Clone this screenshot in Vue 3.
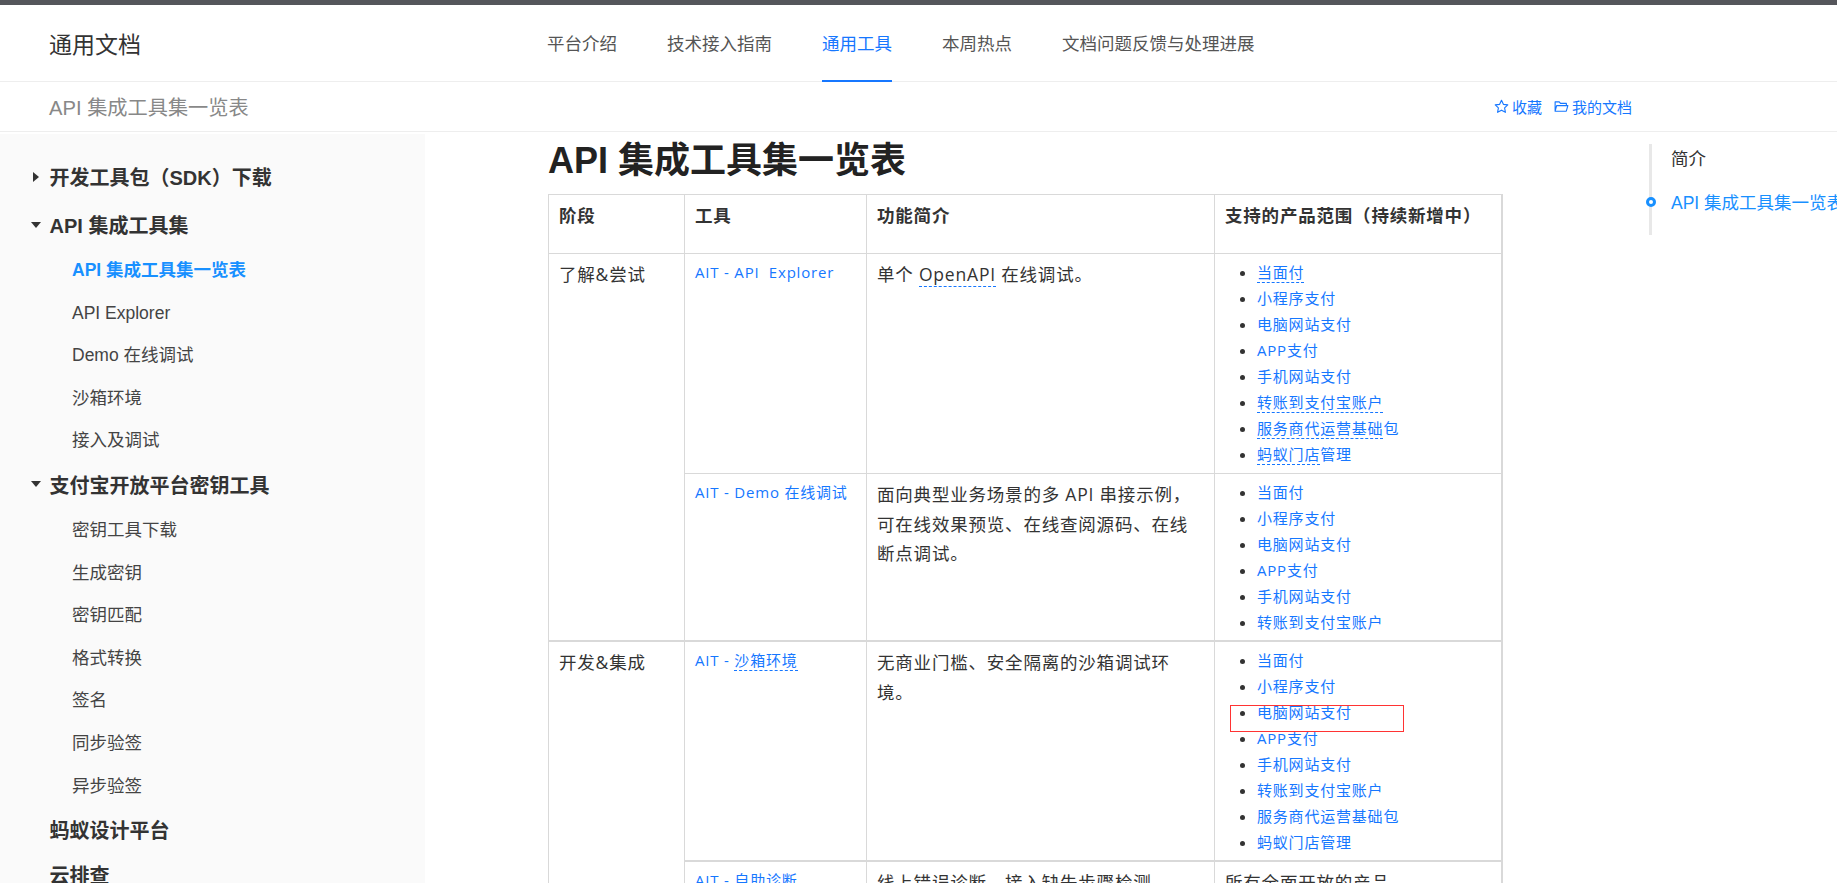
<template>
  <div class="page">
    <div class="top-strip"></div>

    <header class="site-head">
      <div class="logo">通用文档</div>
      <nav class="main-nav">
        <a v-for="item in navItems" :key="item" :class="{ active: item === '通用工具' }">{{ item }}</a>
      </nav>
    </header>

    <div class="sub-head">
      <div class="sub-title">API 集成工具集一览表</div>
      <div class="sub-actions">
        <a>
          <svg width="15" height="15" viewBox="0 0 16 16" fill="none" stroke="currentColor" stroke-width="1.2" stroke-linejoin="round">
            <path d="M8 1.4l2 4.3 4.7.6-3.4 3.2.9 4.7L8 11.9l-4.2 2.3.9-4.7L1.3 6.3 6 5.7z" />
          </svg>
          收藏
        </a>
        <a>
          <svg width="15" height="15" viewBox="0 0 16 16" fill="none" stroke="currentColor" stroke-width="1.2" stroke-linejoin="round">
            <path d="M1.2 13V3h4.4l1.3 1.7h6.3V7M1.2 13l1.6-6h12l-1.7 6z" />
          </svg>
          我的文档
        </a>
      </div>
    </div>

    <div class="layout">
      <aside class="sidebar">
        <div v-for="group in sideGroups" :key="group.title" class="side-group">
          <div class="side-title">
            <span class="arrow">
              <svg v-if="group.arrow === 'right'" width="6" height="10" viewBox="0 0 6 10"><path d="M0 0l6 5-6 5z" fill="#333" /></svg>
              <svg v-else-if="group.arrow === 'down'" width="10" height="6" viewBox="0 0 10 6"><path d="M0 0h10L5 6z" fill="#333" /></svg>
            </span>
            {{ group.title }}
          </div>
          <div v-if="group.children.length" class="side-children">
            <a v-for="child in group.children" :key="child" class="side-link" :class="{ current: child === 'API 集成工具集一览表' }">{{ child }}</a>
          </div>
        </div>
      </aside>

      <main class="content">
        <h1>API 集成工具集一览表</h1>
        <table class="tools">
          <colgroup>
            <col style="width: 136px" />
            <col style="width: 182px" />
            <col style="width: 348px" />
            <col style="width: 287px" />
          </colgroup>
          <thead>
            <tr>
              <th>阶段</th>
              <th>工具</th>
              <th>功能简介</th>
              <th>支持的产品范围（持续新增中）</th>
            </tr>
          </thead>
          <tbody>
            <tr>
              <td rowspan="2">了解&amp;尝试</td>
              <td><a class="tool-link">AIT - API&nbsp; Explorer</a></td>
              <td>单个 <span class="term">OpenAPI</span> 在线调试。</td>
              <td>
                <ul>
                  <li v-for="p in fullList" :key="p[0] + p[1]"><a><span class="term">{{ p[0] }}</span>{{ p[1] }}</a></li>
                </ul>
              </td>
            </tr>
            <tr>
              <td><a class="tool-link">AIT - Demo 在线调试</a></td>
              <td>面向典型业务场景的多 API 串接示例，可在线效果预览、在线查阅源码、在线断点调试。</td>
              <td>
                <ul class="tight">
                  <li v-for="p in shortList" :key="p"><a>{{ p }}</a></li>
                </ul>
              </td>
            </tr>
            <tr class="group-start">
              <td rowspan="2">开发&amp;集成</td>
              <td><a class="tool-link">AIT - <span class="term">沙箱环境</span></a></td>
              <td>无商业门槛、安全隔离的沙箱调试环境。</td>
              <td>
                <ul class="tight">
                  <li v-for="p in plainList" :key="p"><a>{{ p }}</a></li>
                </ul>
              </td>
            </tr>
            <tr class="group-start">
              <td><a class="tool-link">AIT - 自助诊断</a></td>
              <td>线上错误诊断、接入缺失步骤检测。</td>
              <td>所有全面开放的产品</td>
            </tr>
          </tbody>
        </table>
      </main>

      <div class="toc">
        <a>简介</a>
        <a class="on">API 集成工具集一览表</a>
      </div>
    </div>

    <div class="red-mark"></div>
  </div>
</template>

<script setup>
const navItems = ['平台介绍', '技术接入指南', '通用工具', '本周热点', '文档问题反馈与处理进展']

const sideGroups = [
  { title: '开发工具包（SDK）下载', arrow: 'right', children: [] },
  {
    title: 'API 集成工具集',
    arrow: 'down',
    children: ['API 集成工具集一览表', 'API Explorer', 'Demo 在线调试', '沙箱环境', '接入及调试']
  },
  {
    title: '支付宝开放平台密钥工具',
    arrow: 'down',
    children: ['密钥工具下载', '生成密钥', '密钥匹配', '格式转换', '签名', '同步验签', '异步验签']
  },
  { title: '蚂蚁设计平台', children: [] },
  { title: '云排查', children: [] }
]

const shortList = ['当面付', '小程序支付', '电脑网站支付', 'APP支付', '手机网站支付', '转账到支付宝账户']
const plainList = [...shortList, '服务商代运营基础包', '蚂蚁门店管理']

// 第一个是带虚线的术语部分，第二个是后面的普通文字
const fullList = [
  ['当面付', ''],
  ['', '小程序支付'],
  ['', '电脑网站支付'],
  ['', 'APP支付'],
  ['', '手机网站支付'],
  ['转账到支付宝账户', ''],
  ['服务商代运营基础', '包'],
  ['蚂蚁门店', '管理']
]
</script>

<style>
html,
body {
  margin: 0;
  overflow: hidden;
  background: #fff;
}
</style>

<style scoped>
.page {
  position: relative;
  height: 883px;
  overflow: hidden;
  font-family: "Liberation Sans", "Noto Sans CJK SC", sans-serif;
  color: #333;
}

.top-strip {
  height: 5px;
  background: #55565b;
}

.site-head {
  display: flex;
  align-items: center;
  height: 76px;
  padding-left: 49px;
  border-bottom: 1px solid #eee;
}

.logo {
  width: 498px;
  font-size: 23px;
  color: #333;
}

.main-nav {
  display: flex;
  gap: 50px;
  height: 100%;
}

.main-nav a {
  display: flex;
  align-items: center;
  font-size: 17.5px;
  color: #555;
  border-bottom: 2px solid transparent;
  margin-bottom: -1px;
}

.main-nav a.active {
  color: #1677ff;
  border-bottom-color: #1677ff;
}

.sub-head {
  display: flex;
  align-items: center;
  height: 49px;
  padding-left: 49px;
  border-bottom: 1px solid #eee;
}

.sub-title {
  width: 1445px;
  font-size: 20.2px;
  color: #888;
}

.sub-actions {
  display: flex;
  gap: 12px;
}

.sub-actions a {
  display: flex;
  align-items: center;
  gap: 3px;
  font-size: 15px;
  color: #1677ff;
}

.layout {
  display: flex;
  margin-top: 2px;
}

.sidebar {
  flex: none;
  width: 425px;
  height: 760px;
  padding-top: 20px;
  box-sizing: border-box;
  background: #fafafa;
}

.side-group:first-child {
  margin-bottom: 3px;
}

.side-title {
  display: flex;
  align-items: center;
  height: 45px;
  padding-left: 30.5px;
  font-size: 20px;
  font-weight: 700;
  color: #333;
}

.arrow {
  display: flex;
  justify-content: center;
  align-items: center;
  width: 10px;
  margin-right: 9px;
}

.side-children {
  margin-top: 2px;
}

.side-link {
  display: block;
  height: 42.6px;
  line-height: 42.6px;
  padding-left: 72px;
  font-size: 17.5px;
  color: #444;
}

.side-link.current {
  font-weight: 700;
  color: #1890ff;
}

.content {
  flex: none;
  width: 953px;
  margin-left: 123px;
  font-family: "Open Sans", "Noto Sans CJK SC", sans-serif;
}

h1 {
  margin: 0;
  height: 60px;
  line-height: 53px;
  font-family: "Liberation Sans", "Noto Sans CJK SC", sans-serif;
  font-size: 36px;
  font-weight: 700;
  color: #222;
}

.tools {
  table-layout: fixed;
  width: 953px;
  border-collapse: collapse;
  font-size: 17.5px;
  line-height: 29.7px;
  letter-spacing: 0.8px;
  color: #333;
}

.tools th,
.tools td {
  border: 1px solid #d9d9d9;
  padding: 6px 10px;
  vertical-align: top;
  text-align: left;
}

.tools th {
  height: 46px;
  font-weight: 700;
}

.tools .group-start td {
  border-top-width: 2px;
}

.tools td:last-child,
.tools th:last-child {
  border-right-width: 2px;
}

.tool-link {
  display: block;
  margin-top: -1px;
  font-size: 15px;
  letter-spacing: 0.8px;
  line-height: 26px;
  color: #1677ff;
}

.tools ul {
  margin: -1px 0 0;
  padding-left: 32px;
  font-size: 15px;
  line-height: 26px;
  letter-spacing: 0.8px;
}

.tools ul.tight {
  margin-bottom: -1px;
}

.tools ul a {
  color: #1677ff;
}

.term {
  border-bottom: 1px dashed #1677ff;
}

.toc {
  position: relative;
  flex: none;
  width: 300px;
  height: 91px;
  margin: 10px 0 0 148px;
  padding-left: 19px;
  border-left: 3px solid #e8e8e8;
  font-size: 17.5px;
  white-space: nowrap;
}

.toc a {
  display: block;
  height: 44px;
  line-height: 30px;
  color: #333;
}

.toc a.on {
  color: #1890ff;
}

.toc a.on::before {
  content: "";
  position: absolute;
  left: -6.5px;
  top: 53px;
  width: 4px;
  height: 4px;
  border: 3px solid #1890ff;
  border-radius: 50%;
  background: #fff;
}

.red-mark {
  position: absolute;
  left: 1230px;
  top: 705px;
  width: 172px;
  height: 25px;
  border: 1px solid #f33;
}
</style>
